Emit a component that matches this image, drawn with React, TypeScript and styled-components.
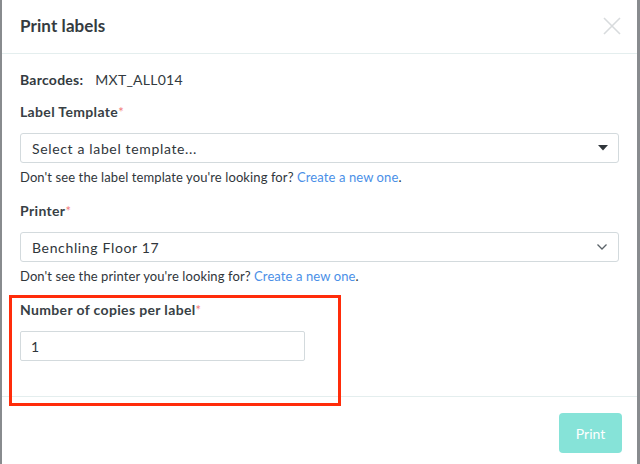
import React from "react";
import styled, { createGlobalStyle } from "styled-components";

const Global = createGlobalStyle`
  html, body { margin: 0; padding: 0; background: #8a8d90; }
  body { font-family: Lato, "Open Sans", sans-serif; color: #333a40; }
  * { box-sizing: border-box; }
`;

const Page = styled.div`
  width: 640px;
  height: 464px;
  padding: 0 3px 0 2px;
  background: #888b8e;
`;

const Modal = styled.div`
  position: relative;
  height: 464px;
  background: #fff;
  display: flex;
  flex-direction: column;
`;

const Header = styled.div`
  height: 54px;
  flex: none;
  display: flex;
  align-items: center;
  justify-content: space-between;
  padding: 0 16px 2px 18px;
  border-bottom: 1px solid #e4eeee;
`;

const Title = styled.h2`
  margin: 0;
  font-size: 17px;
  font-weight: 700;
  color: #353b40;
  letter-spacing: 0.1px;
`;

const Close = styled.button`
  border: 0;
  background: none;
  padding: 0;
  width: 18px;
  height: 18px;
  display: flex;
  cursor: pointer;
`;

const Body = styled.div`
  flex: 1;
  padding: 17px 18px 0 18px;
  display: flex;
  flex-direction: column;
  border-bottom: 1px solid #e4eeee;
`;

const BarcodeRow = styled.div`
  display: flex;
  gap: 12px;
  font-size: 14px;
  letter-spacing: 0.25px;
  height: 18px;
  line-height: 18px;
  align-items: center;
  margin-bottom: 14px;
`;

const BarcodeLabel = styled.span`
  font-weight: 700;
`;

const Field = styled.div<{ $gap?: number }>`
  display: flex;
  flex-direction: column;
  margin-bottom: ${(p) => p.$gap ?? 0}px;
`;

const Label = styled.label`
  font-size: 14px;
  font-weight: 700;
  letter-spacing: 0.35px;
  color: #383f45;
  height: 18px;
  line-height: 18px;
  margin-bottom: 12px;
`;

const Req = styled.span`
  color: #f27b7b;
  font-weight: 400;
  font-size: 13px;
`;

const Select = styled.div`
  height: 30px;
  border: 1px solid #d3dadd;
  border-radius: 3px;
  display: flex;
  align-items: center;
  justify-content: space-between;
  padding: 0 10px 0 11px;
  font-size: 14px;
  letter-spacing: 0.65px;
  color: #30363b;
`;

const Help = styled.div`
  font-size: 13px;
  letter-spacing: 0.1px;
  color: #30363b;
  margin-top: 6px;
  height: 16px;
  line-height: 16px;
`;

const Link = styled.a`
  color: #4a8fe7;
  text-decoration: none;
`;

const NumberInput = styled.div`
  width: 285px;
  height: 30px;
  border: 1px solid #d3dadd;
  border-radius: 2px;
  display: flex;
  align-items: center;
  padding: 0 10px;
  font-size: 14px;
  color: #30363b;
`;

const Footer = styled.div`
  height: 67px;
  flex: none;
  display: flex;
  align-items: flex-start;
  justify-content: flex-end;
  padding: 16px 15px 0 0;
`;

const PrintButton = styled.button`
  width: 63px;
  height: 40px;
  border: 0;
  border-radius: 4px;
  background: #86e3d8;
  color: #fff;
  font-family: Lato, sans-serif;
  font-size: 14px;
`;

const Highlight = styled.div`
  position: absolute;
  left: 7px;
  top: 295px;
  width: 332px;
  height: 111px;
  border: 3px solid #ff2c0a;
  pointer-events: none;
`;

export default function App() {
  return (
    <>
      <Global />
      <Page>
        <Modal>
          <Header>
            <Title>Print labels</Title>
            <Close aria-label="close">
              <svg width="18" height="18" viewBox="0 0 18 18">
                <path d="M1 1L17 17M17 1L1 17" stroke="#d8dbdd" strokeWidth="1.6" />
              </svg>
            </Close>
          </Header>
          <Body>
            <BarcodeRow>
              <BarcodeLabel>Barcodes:</BarcodeLabel>
              <span>MXT_ALL014</span>
            </BarcodeRow>
            <Field $gap={17}>
              <Label>
                Label Template<Req>*</Req>
              </Label>
              <Select>
                <span>Select a label template...</span>
                <svg width="10" height="6" viewBox="0 0 10 6">
                  <path d="M0 0H10L5 5.5Z" fill="#30363b" />
                </svg>
              </Select>
              <Help>
                Don't see the label template you're looking for? <Link>Create a new one</Link>.
              </Help>
            </Field>
            <Field $gap={17}>
              <Label>
                Printer<Req>*</Req>
              </Label>
              <Select>
                <span>Benchling Floor 17</span>
                <svg width="12" height="8" viewBox="0 0 12 8">
                  <path d="M1.5 1.5L6 6L10.5 1.5" stroke="#5a6268" strokeWidth="1.3" fill="none" />
                </svg>
              </Select>
              <Help>
                Don't see the printer you're looking for? <Link>Create a new one</Link>.
              </Help>
            </Field>
            <Field>
              <Label>
                Number of copies per label<Req>*</Req>
              </Label>
              <NumberInput>1</NumberInput>
            </Field>
          </Body>
          <Footer>
            <PrintButton>Print</PrintButton>
          </Footer>
          <Highlight />
        </Modal>
      </Page>
    </>
  );
}
